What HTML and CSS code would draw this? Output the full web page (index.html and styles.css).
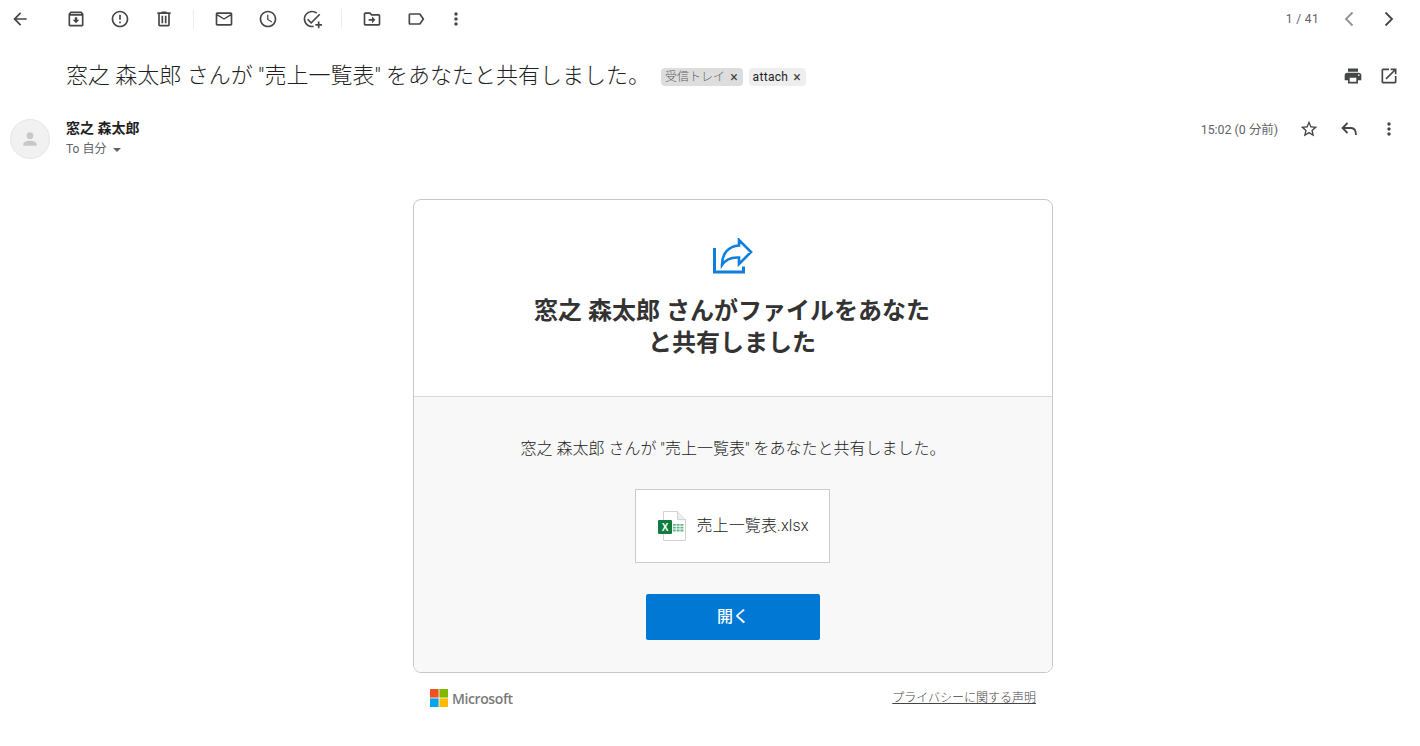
FILE: index.html
```html
<!DOCTYPE html>
<html lang="ja">
<head>
<meta charset="utf-8">
<title>売上一覧表</title>
<link rel="stylesheet" href="styles.css">
</head>
<body>
<div class="toolbar">
  <div class="tools">
    <svg class="ic back" viewBox="0 0 24 24"><path d="M20 11H7.830l5.590-5.590L12 4l-8 8 8 8 1.410-1.410L7.830 13H20v-2z"/></svg>
    <svg class="ic" viewBox="0 0 24 24"><path d="M20.540 5.230l-1.390-1.680C18.880 3.210 18.470 3 18 3H6c-.47 0-.88.21-1.160.55L3.460 5.230C3.170 5.570 3 6.020 3 6.500V19c0 1.100.9 2 2 2h14c1.100 0 2-.9 2-2V6.500c0-.48-.17-.93-.46-1.270zM6.240 5h11.520l.83 1H5.420l.82-1zM5 19V8h14v11H5zm8.450-9h-2.900v3H8l4 4 4-4h-2.550z"/></svg>
    <svg class="ic" viewBox="0 0 24 24"><path d="M11 15h2v2h-2zm0-8h2v6h-2zm1-5C6.470 2 2 6.480 2 12s4.470 10 10 10c5.520 0 10-4.480 10-10S17.520 2 12 2zm0 18c-4.420 0-8-3.580-8-8s3.580-8 8-8 8 3.580 8 8-3.580 8-8 8z"/></svg>
    <svg class="ic" viewBox="0 0 24 24"><path d="M15 4V3H9v1H4v2h1v13c0 1.100.9 2 2 2h10c1.100 0 2-.9 2-2V6h1V4h-5zm2 15H7V6h10v13zM9 8h2v9H9zm4 0h2v9h-2z"/></svg>
    <span class="sep"></span>
    <svg class="ic" viewBox="0 0 24 24"><path d="M22 6c0-1.100-.9-2-2-2H4c-1.100 0-2 .9-2 2v12c0 1.100.9 2 2 2h16c1.100 0 2-.9 2-2V6zm-2 0l-8 5-8-5h16zm0 12H4V8l8 5 8-5v10z"/></svg>
    <svg class="ic" viewBox="0 0 24 24"><path d="M11.990 2C6.470 2 2 6.480 2 12s4.470 10 9.990 10C17.520 22 22 17.520 22 12S17.520 2 11.990 2zM12 20c-4.420 0-8-3.580-8-8s3.580-8 8-8 8 3.580 8 8-3.580 8-8 8zm.5-13H11v6l5.250 3.150.75-1.230-4.500-2.670V7z"/></svg>
    <svg class="ic" viewBox="0 0 24 24"><path d="M12 2C6.500 2 2 6.500 2 12s4.500 10 10 10c.7 0 1.400-.1 2-.2v-2.050c-.6.150-1.300.250-2 .250-4.400 0-8-3.600-8-8s3.600-8 8-8c1.900 0 3.600.650 5 1.750l1.400-1.450C16.650 2.900 14.450 2 12 2zm8.600 3.600L11 15.200l-3.600-3.600L6 13l5 5L22 7zM19 15v3h-3v2h3v3h2v-3h3v-2h-3v-3z"/></svg>
    <span class="sep"></span>
    <svg class="ic" viewBox="0 0 24 24"><path d="M20 6h-8l-2-2H4c-1.100 0-2 .9-2 2v12c0 1.100.9 2 2 2h16c1.100 0 2-.9 2-2V8c0-1.100-.9-2-2-2zm0 12H4V6h5.170l2 2H20v10zm-8-1l4-4-4-4v3H8v2h4v3z"/></svg>
    <svg class="ic" viewBox="0 0 24 24"><path d="M17.630 5.840C17.270 5.330 16.670 5 16 5L5 5.010C3.900 5.010 3 5.900 3 7v10c0 1.100.9 1.990 2 1.990L16 19c.67 0 1.270-.33 1.630-.84L22 12l-4.370-6.160zM16 17H5V7h11l3.550 5L16 17z"/></svg>
    <svg class="ic dots" viewBox="0 0 24 24"><path d="M12 8c1.100 0 2-.9 2-2s-.9-2-2-2-2 .9-2 2 .9 2 2 2zm0 2c-1.100 0-2 .9-2 2s.9 2 2 2 2-.9 2-2-.9-2-2-2zm0 6c-1.100 0-2 .9-2 2s.9 2 2 2 2-.9 2-2-.9-2-2-2z"/></svg>
  </div>
  <div class="pager">
    <span class="count">1 / 41</span>
    <svg class="ic chev faded" viewBox="0 0 20 20"><path d="M13.500 3.500L7 10l6.500 6.500"/></svg>
    <svg class="ic chev" viewBox="0 0 20 20"><path d="M6.500 3.500L13 10l-6.500 6.500"/></svg>
  </div>
</div>

<div class="subject-row">
  <h1 class="subject">窓之 森太郎 さんが "売上一覧表" をあなたと共有しました。</h1>
  <span class="chip chip-inbox">受信トレイ<i class="x">×</i></span>
  <span class="chip chip-attach">attach<i class="x">×</i></span>
  <div class="subject-actions">
    <svg class="ic" viewBox="0 0 24 24"><path d="M19 8H5c-1.660 0-3 1.340-3 3v6h4v4h12v-4h4v-6c0-1.660-1.340-3-3-3zm-3 11H8v-5h8v5zm3-7c-.55 0-1-.45-1-1s.45-1 1-1 1 .45 1 1-.45 1-1 1zm-1-9H6v4h12V3z"/></svg>
    <svg class="ic" viewBox="0 0 24 24"><path d="M19 19H5V5h7V3H5c-1.110 0-2 .9-2 2v14c0 1.100.89 2 2 2h14c1.100 0 2-.9 2-2v-7h-2v7zM14 3v2h3.590l-9.830 9.830 1.410 1.410L19 6.410V10h2V3h-7z"/></svg>
  </div>
</div>

<div class="sender-row">
  <div class="avatar">
    <svg class="avatar-ic" viewBox="0 0 24 24"><circle cx="12" cy="8" r="4"/><path d="M12 14c-4.400 0-8 1.800-8 4v2h16v-2c0-2.200-3.600-4-8-4z"/></svg>
  </div>
  <div class="sender-info">
    <div class="sender-name">窓之 森太郎</div>
    <div class="sender-to">To 自分<span class="caret"></span></div>
  </div>
  <div class="sender-meta">
    <span class="time">15:02 (0 分前)</span>
    <svg class="ic" viewBox="0 0 24 24"><path d="M22 9.240l-7.190-.62L12 2 9.190 8.630 2 9.240l5.460 4.730L5.820 21 12 17.270 18.180 21l-1.630-7.030L22 9.240zM12 15.400l-3.760 2.270 1-4.280-3.320-2.880 4.380-.38L12 6.100l1.710 4.040 4.380.38-3.320 2.880 1 4.280L12 15.400z"/></svg>
    <svg class="ic chev" viewBox="0 0 20 20"><path d="M8.500 4L3.500 9l5 5M3.500 9H12c3.500 0 5 2.500 5 7"/></svg>
    <svg class="ic" viewBox="0 0 24 24"><path d="M12 8c1.100 0 2-.9 2-2s-.9-2-2-2-2 .9-2 2 .9 2 2 2zm0 2c-1.100 0-2 .9-2 2s.9 2 2 2 2-.9 2-2-.9-2-2-2zm0 6c-1.100 0-2 .9-2 2s.9 2 2 2 2-.9 2-2-.9-2-2-2z"/></svg>
  </div>
</div>

<div class="mail">
  <div class="card">
    <div class="card-top">
      <svg class="share" viewBox="0 0 40 36"><path d="M1.500 10v24h29v-5.500" fill="none" stroke="#0f7fdc" stroke-width="3"/><path d="M9 27C9 15 16 8 26 7.500V2l12 12-12 12v-6.500C19 19 13 21 9 27z" fill="none" stroke="#0f7fdc" stroke-width="2.600"/></svg>
      <h2 class="headline">窓之 森太郎 さんがファイルをあなた<br>と共有しました</h2>
    </div>
    <div class="card-bottom">
      <p class="message">窓之 森太郎 さんが "売上一覧表" をあなたと共有しました。</p>
      <div class="file">
        <svg class="xl" viewBox="0 0 28 30"><path d="M5.500.5h14l8 8v21h-22z" fill="#fff" stroke="#d2d2d2"/><path d="M19.500.5v8h8" fill="#eee" stroke="#d2d2d2"/><path d="M15 13h2.800v1.800H15zm3.600 0h3v1.800h-3zm3.800 0h3v1.800h-3zM15 15.800h2.800v1.800H15zm3.600 0h3v1.800h-3zm3.800 0h3v1.800h-3zM15 18.600h2.800v1.800H15zm3.600 0h3v1.800h-3zm3.800 0h3v1.800h-3z" fill="#5fb58a"/><rect y="9" width="14" height="14" rx="1" fill="#107c41"/><text x="7" y="20" class="xl-x">X</text></svg>
        <span class="file-name">売上一覧表.xlsx</span>
      </div>
      <a class="open">開く</a>
    </div>
  </div>
  <div class="footer">
    <div class="ms">
      <svg class="ms-logo" viewBox="0 0 18 18"><rect width="8.600" height="8.600" fill="#f25022"/><rect x="9.400" width="8.600" height="8.600" fill="#7fba00"/><rect y="9.400" width="8.600" height="8.600" fill="#00a4ef"/><rect x="9.400" y="9.400" width="8.600" height="8.600" fill="#ffb900"/></svg>
      <span class="ms-name">Microsoft</span>
    </div>
    <a class="privacy">プライバシーに関する声明</a>
  </div>
</div>
</body>
</html>
```
FILE: styles.css
```css
* { box-sizing: border-box; }
html, body { margin: 0; padding: 0; }
body {
  width: 1420px;
  height: 746px;
  overflow: hidden;
  background: #fff;
  font-family: Roboto, "Noto Sans CJK JP", sans-serif;
  color: #202124;
}
.ic { width: 20px; height: 20px; flex: none; fill: #444746; }
.chev { fill: none; stroke: #444746; stroke-width: 1.800; }
.toolbar {
  height: 38px;
  display: flex;
  align-items: center;
  justify-content: space-between;
  padding: 0 21px 0 10px;
}
.tools { display: flex; align-items: center; gap: 24px; }
.tools .back { margin-right: 12px; }
.tools .dots { margin-left: -4px; }
.sep { width: 1px; height: 20px; background: #eceded; margin: 0 -4px 0 -5px; }
.pager { display: flex; align-items: center; gap: 20px; }
.count { font-size: 12px; color: #5f6368; letter-spacing: .35px; }
.chev.faded { stroke: #8f9193; }
.subject-row {
  height: 81px;
  padding: 0 21px 5px 66px;
  display: flex;
  align-items: center;
}
.subject {
  margin: 0;
  font-size: 22px;
  font-weight: 300;
  color: #1f1f1f;
  white-space: nowrap;
  line-height: 28px;
}
.chip {
  height: 18px;
  line-height: 18px;
  font-size: 12px;
  border-radius: 4px;
  padding: 0 5px 0 4px;
  margin-top: 2px;
  white-space: nowrap;
  display: flex;
  align-items: center;
}
.chip-inbox { background: #dddddd; color: #5f5f5f; margin-left: 11px; font-weight: 300; }
.chip-attach { background: #eeeeee; color: #222; margin-left: 6px; letter-spacing: .3px; }
.x { font-style: normal; margin-left: 5px; font-size: 14px; font-weight: 400; color: #444; letter-spacing: 0; }
.subject-actions { margin-left: auto; display: flex; gap: 16px; }
.sender-row {
  height: 59px;
  padding: 0 21px 0 10px;
  display: flex;
  align-items: flex-start;
}
.avatar {
  width: 40px;
  height: 40px;
  border-radius: 50%;
  background: #f1f1f1;
  border: 1px solid #e6e6e6;
  display: flex;
  align-items: center;
  justify-content: center;
}
.avatar-ic { width: 20px; height: 20px; fill: #c8c8c8; }
.sender-info { margin-left: 16px; }
.sender-name { font-size: 14px; font-weight: 700; line-height: 18px; color: #1f1f1f; }
.sender-to { font-size: 12px; line-height: 24px; color: #5f6368; display: flex; align-items: center; }
.caret {
  width: 0;
  height: 0;
  margin-left: 7px;
  margin-top: 2px;
  border: 4px solid transparent;
  border-top: 4px solid #5f6368;
  border-bottom: 0;
}
.sender-meta { margin-left: auto; display: flex; align-items: center; gap: 20px; height: 20px; }
.time { font-size: 12.400px; color: #5f6368; margin-right: 1px; }
.mail { width: 640px; margin: 21px 0 0 413px; }
.card {
  border: 1px solid #c8c8c8;
  border-radius: 8px;
  overflow: hidden;
  height: 474px;
}
.card-top {
  height: 197px;
  padding-top: 38px;
  border-bottom: 1px solid #d9d9d9;
  display: flex;
  flex-direction: column;
  align-items: center;
}
.share { width: 40px; height: 36px; display: block; }
.headline {
  margin: 21px 2px 0 0;
  font-size: 24px;
  line-height: 32px;
  font-weight: 700;
  color: #333;
  text-align: center;
}
.card-bottom {
  height: 276px;
  background: #f8f8f8;
  display: flex;
  flex-direction: column;
  align-items: center;
  padding-top: 41px;
}
.message { margin: 0; font-size: 16px; line-height: 22px; font-weight: 300; color: #222; }
.file {
  margin: 29px 2px 0 0;
  width: 195px;
  height: 74px;
  background: #fff;
  border: 1px solid #ccc;
  display: flex;
  align-items: center;
  padding-left: 22px;
}
.xl { width: 28px; height: 30px; flex: none; }
.xl-x { font: 700 10px "Liberation Sans", sans-serif; fill: #fff; text-anchor: middle; }
.file-name { margin: 0 0 4px 11px; font-size: 16px; font-weight: 300; color: #222; letter-spacing: .1px; }
.open {
  margin-top: 31px;
  width: 174px;
  height: 46px;
  padding-bottom: 4px;
  background: #0078d4;
  border-radius: 2px;
  color: #fff;
  font-size: 16px;
  font-weight: 500;
  display: flex;
  align-items: center;
  justify-content: center;
}
.footer {
  height: 50px;
  padding: 0 17px 0 17px;
  display: flex;
  align-items: center;
  justify-content: space-between;
}
.ms { display: flex; align-items: center; gap: 4px; }
.ms-logo { width: 18px; height: 18px; }
.ms-name { font-family: "Open Sans", sans-serif; font-size: 14px; font-weight: 600; color: #7a7a7a; letter-spacing: -.4px; }
.privacy { font-size: 12px; font-weight: 300; color: #444; text-decoration: underline; margin-bottom: 4px; }
```
